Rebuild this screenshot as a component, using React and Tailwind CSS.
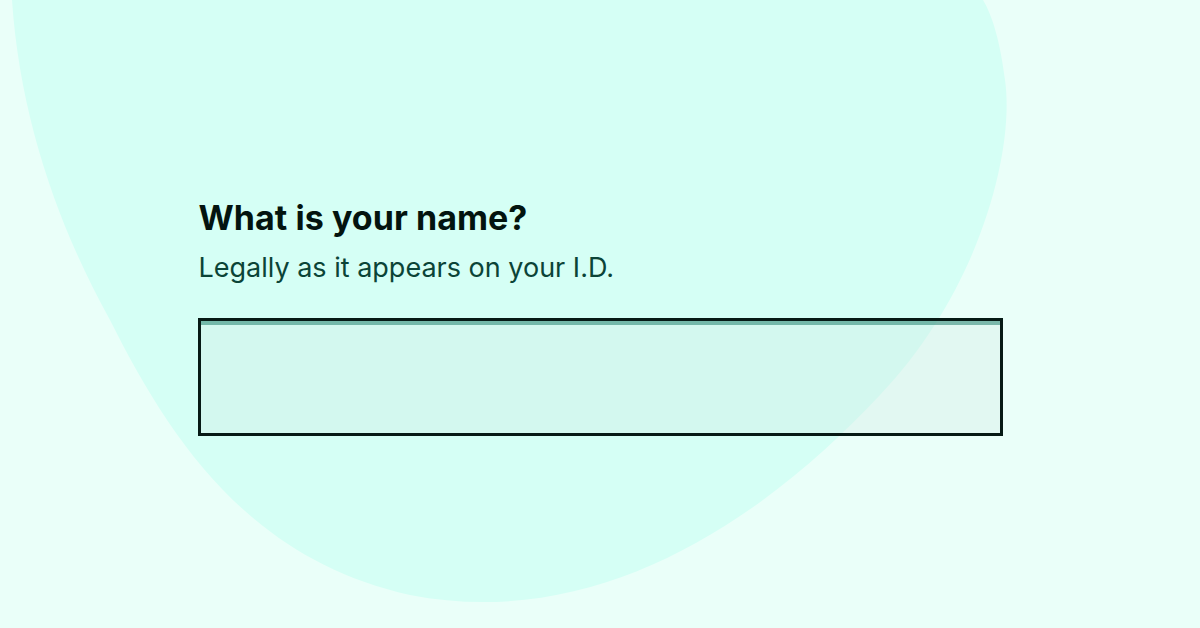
import React from 'react';

const Blob = () => (
  <svg
    className="absolute inset-0"
    width="1200"
    height="628"
    viewBox="0 0 1200 628"
    aria-hidden="true"
  >
    <path
      d="M12 0 C20 120 60 230 110 320 C170 440 250 560 410 595 C600 632 765 518 880 395 C980 290 1015 150 1005 80 C1000 40 992 15 983 0 Z"
      fill="#d5fff5"
    />
  </svg>
);

const App = () => {
  return (
    <div className="relative h-[628px] w-full overflow-hidden bg-[#eafff9] font-['Inter',sans-serif]">
      <Blob />
      <div className="relative flex h-full items-center justify-center">
        <div className="w-[805px] pt-[6px]">
          <h1 className="pl-[1px] text-[34px] font-bold leading-[40px] tracking-[0.05px] text-[#03140f]">
            What is your name?
          </h1>
          <p className="mt-[14px] pl-[1px] text-[27px] leading-[32px] text-[#0b4437]">
            Legally as it appears on your I.D.
          </p>
          <div className="mt-[34px] h-[118px] border-[3px] border-[#061a15] bg-[#cfe9e2]/30 shadow-[inset_0_4px_0_rgba(20,120,100,0.5)]" />
        </div>
      </div>
    </div>
  );
};

export default App;
